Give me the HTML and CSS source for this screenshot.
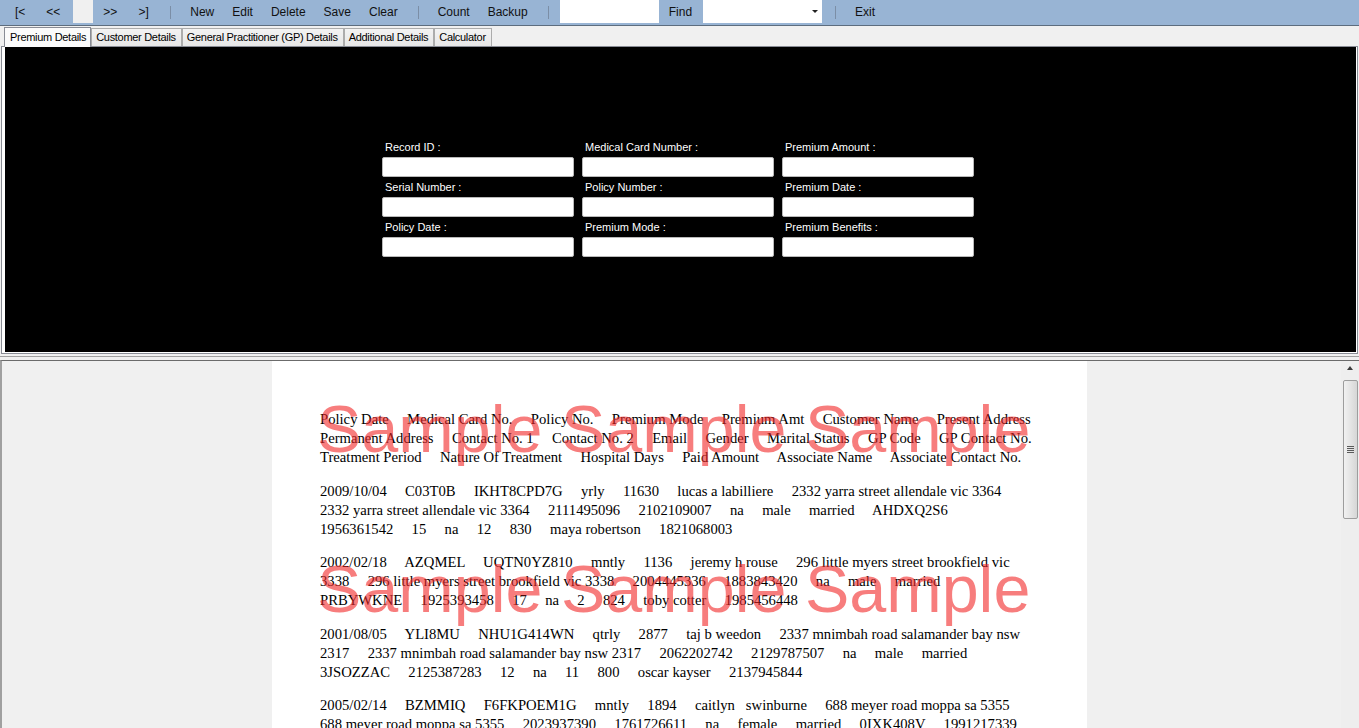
FILE: index.html
```html
<!DOCTYPE html>
<html>
<head>
<meta charset="utf-8">
<title>Premium Details</title>
<link rel="stylesheet" href="styles.css">
</head>
<body>
<div class="app">
  <div class="toolbar">
    <span class="tb nav">[&lt;</span>
    <span class="tb nav">&lt;&lt;</span>
    <span class="box pos"></span>
    <span class="tb nav">&gt;&gt;</span>
    <span class="tb nav">&gt;]</span>
    <span class="sep"></span>
    <span class="tb">New</span>
    <span class="tb">Edit</span>
    <span class="tb">Delete</span>
    <span class="tb">Save</span>
    <span class="tb">Clear</span>
    <span class="sep"></span>
    <span class="tb">Count</span>
    <span class="tb">Backup</span>
    <span class="sep"></span>
    <span class="box find-input"></span>
    <span class="tb">Find</span>
    <span class="box combo"><span class="combo-arrow"></span></span>
    <span class="sep"></span>
    <span class="tb">Exit</span>
  </div>

  <div class="tabs">
    <span class="tab active">Premium Details</span>
    <span class="tab">Customer Details</span>
    <span class="tab">General Practitioner (GP) Details</span>
    <span class="tab">Additional Details</span>
    <span class="tab">Calculator</span>
  </div>

  <div class="tabpage">
    <div class="black">
      <div class="form">
        <div class="field"><label>Record ID :</label><div class="input"></div></div>
        <div class="field"><label>Medical Card Number :</label><div class="input"></div></div>
        <div class="field"><label>Premium Amount :</label><div class="input"></div></div>
        <div class="field"><label>Serial Number :</label><div class="input"></div></div>
        <div class="field"><label>Policy Number :</label><div class="input"></div></div>
        <div class="field"><label>Premium Date :</label><div class="input"></div></div>
        <div class="field"><label>Policy Date :</label><div class="input"></div></div>
        <div class="field"><label>Premium Mode :</label><div class="input"></div></div>
        <div class="field"><label>Premium Benefits :</label><div class="input"></div></div>
      </div>
    </div>
  </div>

  <div class="split"></div>

  <div class="viewer">
    <div class="pages">
      <div class="page">
<p>Policy Date     Medical Card No.     Policy No.     Premium Mode     Premium Amt     Customer Name     Present Address     Permanent Address     Contact No. 1     Contact No. 2     Email     Gender     Marital Status     GP Code     GP Contact No.     Treatment Period     Nature Of Treatment     Hospital Days     Paid Amount     Associate Name     Associate Contact No.</p>
<p>2009/10/04     C03T0B     IKHT8CPD7G     yrly     11630     lucas a labilliere     2332 yarra street allendale vic 3364     2332 yarra street allendale vic 3364     2111495096     2102109007     na     male     married     AHDXQ2S6     1956361542     15     na     12     830     maya robertson     1821068003</p>
<p>2002/02/18     AZQMEL     UQTN0YZ810     mntly     1136     jeremy h rouse     296 little myers street brookfield vic 3338     296 little myers street brookfield vic 3338     2004445336     1883843420     na     male     married     PRBYWKNE     1925393458     17     na     2     824     toby cotter     1985456448</p>
<p>2001/08/05     YLI8MU     NHU1G414WN     qtrly     2877     taj b weedon     2337 mnimbah road salamander bay nsw 2317     2337 mnimbah road salamander bay nsw 2317     2062202742     2129787507     na     male     married     3JSOZZAC     2125387283     12     na     11     800     oscar kayser     2137945844</p>
<p>2005/02/14     BZMMIQ     F6FKPOEM1G     mntly     1894     caitlyn   swinburne     688 meyer road moppa sa 5355     688 meyer road moppa sa 5355     2023937390     1761726611     na     female     married     0IXK408V     1991217339     9     na     5     610     lily norman     1874521906</p>
        <div class="wm wm1">Sample Sample Sample</div>
        <div class="wm wm2">Sample Sample Sample</div>
      </div>
    </div>
    <div class="vscroll">
      <div class="up-btn"><span class="up-arrow"></span></div>
      <div class="thumb"><span class="grip"></span></div>
    </div>
  </div>
</div>
</body>
</html>
```
FILE: styles.css
```css
html, body {
  margin: 0;
  padding: 0;
}
body {
  background: #f0f0f0;
  font-family: "Liberation Sans", Arial, sans-serif;
  width: 1359px;
  height: 728px;
  overflow: hidden;
}
.app {
  display: flex;
  flex-direction: column;
  height: 728px;
}

/* ---------- toolbar ---------- */
.toolbar {
  display: flex;
  align-items: center;
  height: 25px;
  background: #98b4d4;
  border-bottom: 1px solid #5d6d7e;
  padding-left: 4.5px;
  font-size: 12px;
  color: #111;
  flex: none;
}
.tb {
  padding: 0 9px;
  line-height: 25px;
  white-space: nowrap;
}
.tb.nav {
  padding: 0 10.5px;
}
.box {
  align-self: flex-start;
  height: 23px;
  background: #fff;
}
.pos {
  width: 20px;
  background: #f0f0f0;
  margin-left: 2px;
}
.find-input {
  width: 99px;
  margin-left: 1px;
  margin-right: 1px;
}
.combo {
  width: 119px;
  margin: 0 2px;
  position: relative;
}
.combo-arrow {
  position: absolute;
  right: 4px;
  top: 10px;
  width: 0;
  height: 0;
  border-left: 3px solid transparent;
  border-right: 3px solid transparent;
  border-top: 3px solid #222;
}
.sep {
  width: 1px;
  height: 13px;
  background: #7b8ea6;
  margin: 0 10px 0 11px;
}

/* ---------- tabs ---------- */
.tabs {
  display: flex;
  align-items: flex-end;
  height: 20px;
  padding-left: 4px;
  font-size: 11px;
  letter-spacing: -0.3px;
  color: #000;
  position: relative;
  z-index: 1;
  flex: none;
}
.tab {
  height: 17px;
  line-height: 17px;
  padding: 0 5px 0 4px;
  border: 1px solid #acacac;
  border-bottom: none;
  background: linear-gradient(#f3f3f3, #e7e7e7);
  white-space: nowrap;
}
.tab.active {
  height: 19px;
  line-height: 19px;
  padding: 0 4px 0 5px;
  margin-bottom: -1px;
  border-color: #898c95;
  background: #fbfbfb;
}

/* ---------- tab page ---------- */
.tabpage {
  margin: 0 1px;
  border: 1px solid #898c95;
  background: #fff;
  padding: 0 1px 1px 3px;
  flex: none;
}
.black {
  background: #000;
  height: 305px;
  display: flex;
  align-items: center;
  justify-content: center;
}
.form {
  display: grid;
  grid-template-columns: repeat(3, 192px);
  column-gap: 8px;
  row-gap: 2px;
  margin-left: -5px;
  margin-top: -3px;
}
.field {
  display: flex;
  flex-direction: column;
}
.field label {
  color: #fff;
  font-size: 11px;
  line-height: 16px;
  height: 16px;
  padding-left: 3px;
  margin-bottom: 2px;
  white-space: nowrap;
}
.input {
  height: 18px;
  background: #fff;
  border: 1px solid #b9b9b9;
  border-radius: 2px;
}

/* ---------- splitter ---------- */
.split {
  height: 2px;
  border-bottom: 1px solid #a0a0a0;
  margin-bottom: 3px;
  flex: none;
}

/* ---------- viewer ---------- */
.viewer {
  flex: 1;
  display: flex;
  border-top: 1px solid #6b6b6b;
  border-left: 2px solid #a0a0a0;
  background: #f0f0f0;
  overflow: hidden;
  min-height: 0;
}
.pages {
  flex: 1;
  padding-left: 270px;
  overflow: hidden;
}
.page {
  position: relative;
  width: 815px;
  box-sizing: border-box;
  min-height: 100%;
  background: #fff;
  padding: 49px 49px 0 48px;
  font-family: "Liberation Serif", "Times New Roman", serif;
  font-size: 14.67px;
  line-height: 19px;
  color: #000;
}
.page p {
  margin: 0 0 14.5px;
  white-space: pre-wrap;
}
.wm {
  position: absolute;
  left: 45px;
  font-family: "Liberation Sans", Arial, sans-serif;
  font-size: 66.5px;
  line-height: 66.5px;
  color: rgba(242, 38, 38, 0.6);
  white-space: nowrap;
  pointer-events: none;
}
.wm1 { top: 35px; }
.wm2 { top: 195px; }

/* ---------- scrollbar ---------- */
.vscroll {
  width: 18px;
  flex: none;
  background: #eeeeee;
  display: flex;
  flex-direction: column;
  align-items: center;
}
.up-btn {
  height: 17px;
  width: 18px;
  display: flex;
  align-items: center;
  justify-content: center;
}
.up-arrow {
  width: 0;
  height: 0;
  border-left: 3.5px solid transparent;
  border-right: 3.5px solid transparent;
  border-bottom: 4px solid #3c3c3c;
  margin-top: -3px;
}
.thumb {
  margin-top: 2px;
  width: 13px;
  height: 137px;
  border: 1px solid #9d9d9d;
  border-radius: 2px;
  background: linear-gradient(90deg, #f1f1f1, #e4e4e4 50%, #d6d6d6);
  display: flex;
  align-items: center;
  justify-content: center;
}
.grip {
  width: 7px;
  height: 7px;
  background: repeating-linear-gradient(#5a5a5a 0 1px, transparent 1px 2px);
}
```
